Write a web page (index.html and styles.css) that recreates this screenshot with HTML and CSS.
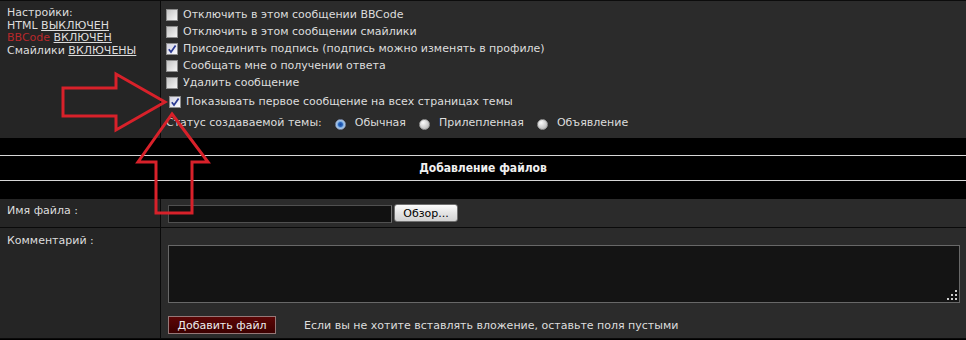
FILE: index.html
```html
<!DOCTYPE html>
<html lang="ru">
  <head>
    <meta charset="UTF-8" />
    <title>Добавление файлов</title>
    <link rel="stylesheet" href="styles.css">
  </head>
  <body>
    <div class="page">
      <div class="row row-options">
        <div class="label-cell settings">
          Настройки:<br>
          HTML <u>ВЫКЛЮЧЕН</u><br>
          <span class="red">BBCode</span> <u>ВКЛЮЧЕН</u><br>
          Смайлики <u>ВКЛЮЧЕНЫ</u>
        </div>
        <div class="field-cell options">
          <label class="opt"><span class="cb"></span>Отключить в этом сообщении BBCode</label>
          <label class="opt"><span class="cb"></span>Отключить в этом сообщении смайлики</label>
          <label class="opt"><span class="cb checked"><svg width="10" height="10" viewBox="0 0 10 10"><path d="M1.8 5.2 L4 8 L8.6 1.4" fill="none" stroke="#2b3a92" stroke-width="1.7"/></svg></span>Присоединить подпись (подпись можно изменять в профиле)</label>
          <label class="opt"><span class="cb"></span>Сообщать мне о получении ответа</label>
          <label class="opt"><span class="cb"></span>Удалить сообщение</label>
          <label class="opt opt-shift"><span class="cb checked"><svg width="10" height="10" viewBox="0 0 10 10"><path d="M1.8 5.2 L4 8 L8.6 1.4" fill="none" stroke="#2b3a92" stroke-width="1.7"/></svg></span>Показывать первое сообщение на всех страницах темы</label>
          <div class="opt status">
            Статус создаваемой темы:
            <span class="radio on"></span>Обычная
            <span class="radio"></span>Прилепленная
            <span class="radio"></span>Объявление
          </div>
        </div>
      </div>

      <div class="section-head">
        <div class="sh-pad"></div>
        <div class="sh-title">Добавление файлов</div>
        <div class="sh-pad sh-pad-bottom"></div>
      </div>

      <div class="row row-file">
        <div class="label-cell">Имя файла :</div>
        <div class="field-cell file-cell">
          <input class="path" type="text" />
          <button class="browse">Обзор...</button>
        </div>
      </div>

      <div class="row row-comment">
        <div class="label-cell">Комментарий :</div>
        <div class="field-cell comment-cell">
          <div class="textarea-wrap">
            <textarea class="comment"></textarea>
            <svg class="grip" width="11" height="11" viewBox="0 0 11 11">
              <rect x="8" y="0" width="2" height="2" fill="#cfcfcf"/>
              <rect x="4" y="4" width="2" height="2" fill="#cfcfcf"/>
              <rect x="8" y="4" width="2" height="2" fill="#cfcfcf"/>
              <rect x="0" y="8" width="2" height="2" fill="#cfcfcf"/>
              <rect x="4" y="8" width="2" height="2" fill="#cfcfcf"/>
              <rect x="8" y="8" width="2" height="2" fill="#cfcfcf"/>
            </svg>
          </div>
          <div class="actions">
            <button class="add">Добавить файл</button>
            <span class="hint">Если вы не хотите вставлять вложение, оставьте поля пустыми</span>
          </div>
        </div>
      </div>

      <!-- red arrows drawn over the form -->
      <svg class="arrows" width="966" height="340" viewBox="0 0 966 340">
        <polygon points="63,88 116,88 116,74 165,102 116,130 116,116 63,116" fill="none" stroke="#d8212a" stroke-width="3" stroke-linejoin="miter"/>
        <polygon points="172,114 208,162 192,162 192,213 156,213 156,162 138,162" fill="none" stroke="#d8212a" stroke-width="3" stroke-linejoin="miter"/>
      </svg>
    </div>
  </body>
</html>
```

FILE: styles.css
```css
body {
  margin: 0;
  background-color: rgb(0, 0, 0);
  font-family: "DejaVu Sans", Verdana, sans-serif;
  font-size: 11px;
  color: rgb(221, 221, 221);
}

.page {
  position: relative;
  width: 966px;
  height: 340px;
  overflow: hidden;
  border-top: 1px solid rgb(12, 12, 12);
  box-sizing: border-box;
}

.row {
  display: grid;
  grid-template-columns: 161px 1fr;
}

.label-cell {
  background-color: rgb(37, 37, 37);
  border-right: 1px solid rgb(10, 10, 10);
  padding: 5px 7px 0;
  line-height: 13px;
}

.field-cell {
  background-color: rgb(43, 43, 43);
}

/* options block */
.row-options {
  height: 137px;
}

.settings {
  padding-top: 6px;
  line-height: 12.7px;
}

.red {
  color: rgb(184, 40, 43);
}

.options {
  padding: 5px 0 0 5px;
}

.opt {
  display: flex;
  align-items: center;
  height: 17px;
  white-space: nowrap;
}

.opt-shift {
  margin-top: 2px;
  padding-left: 3px;
}

.cb {
  width: 12px;
  height: 12px;
  box-sizing: border-box;
  border: 1px solid rgb(140, 140, 140);
  background: linear-gradient(135deg, rgb(196, 196, 196), rgb(245, 245, 245));
  margin-right: 5px;
  flex: none;
  display: flex;
  align-items: center;
  justify-content: center;
}

.cb.checked {
  background: linear-gradient(135deg, rgb(210, 210, 224), rgb(250, 250, 255));
}

.status {
  margin-top: 4px;
}

.radio {
  width: 11px;
  height: 11px;
  box-sizing: border-box;
  border-radius: 50%;
  border: 1px solid rgb(150, 150, 150);
  background: radial-gradient(circle at 35% 30%, rgb(250, 250, 250), rgb(190, 190, 190) 75%);
  margin: 4px 9px 0 13px;
  flex: none;
}

.radio.on {
  border-color: rgb(120, 136, 168);
  background: radial-gradient(circle, rgb(20, 70, 160) 0, rgb(40, 100, 190) 2px, rgb(120, 170, 225) 3px, rgb(210, 225, 242) 5px);
}

/* section header */
.section-head {
  background-color: rgb(0, 0, 0);
}

.sh-pad {
  height: 17px;
}

.sh-pad-bottom {
  height: 18px;
}

.sh-title {
  height: 24px;
  border-top: 1px solid rgb(214, 214, 214);
  border-bottom: 1px solid rgb(214, 214, 214);
  display: flex;
  align-items: center;
  justify-content: center;
  font-family: "DejaVu Sans Condensed", "DejaVu Sans", sans-serif;
  font-weight: bold;
  font-size: 12px;
  color: rgb(240, 240, 240);
}

/* file row */
.row-file {
  height: 28px;
  border-bottom: 1px solid rgb(10, 10, 10);
}

.file-cell {
  display: flex;
  align-items: center;
  gap: 2px;
  padding-left: 7px;
}

.path {
  width: 224px;
  height: 18px;
  box-sizing: border-box;
  background-color: rgb(17, 17, 17);
  border: 1px solid rgb(80, 80, 80);
  border-right-color: rgb(110, 110, 110);
  margin: 1px 0 0;
  padding: 0;
}

.browse {
  width: 64px;
  height: 18px;
  padding: 0;
  border: 1px solid rgb(112, 112, 112);
  border-radius: 3px;
  background: linear-gradient(rgb(252, 252, 252), rgb(228, 228, 228) 50%, rgb(210, 210, 210));
  font-family: "DejaVu Sans", Verdana, sans-serif;
  font-size: 11px;
  color: rgb(0, 0, 0);
}

/* comment row */
.row-comment {
  height: 110px;
  border-bottom: 1px solid rgb(10, 10, 10);
}

.row-comment .label-cell {
  padding-top: 6px;
}

.comment-cell {
  padding: 17px 6px 0 7px;
}

.textarea-wrap {
  position: relative;
}

.comment {
  display: block;
  width: 100%;
  height: 58px;
  box-sizing: border-box;
  margin: 0;
  background-color: rgb(20, 20, 20);
  border: 1px solid rgb(104, 104, 104);
  resize: none;
}

.grip {
  position: absolute;
  right: 2px;
  bottom: 2px;
}

.actions {
  display: flex;
  align-items: center;
  margin-top: 13px;
  gap: 28px;
}

.add {
  width: 108px;
  height: 18px;
  padding: 0;
  border: 1px solid rgb(150, 120, 120);
  background: linear-gradient(rgb(92, 6, 6), rgb(60, 0, 0));
  font-family: "DejaVu Sans", Verdana, sans-serif;
  font-size: 11px;
  color: rgb(236, 236, 236);
}

.arrows {
  position: absolute;
  top: -1px;
  left: 0;
  pointer-events: none;
}
```
